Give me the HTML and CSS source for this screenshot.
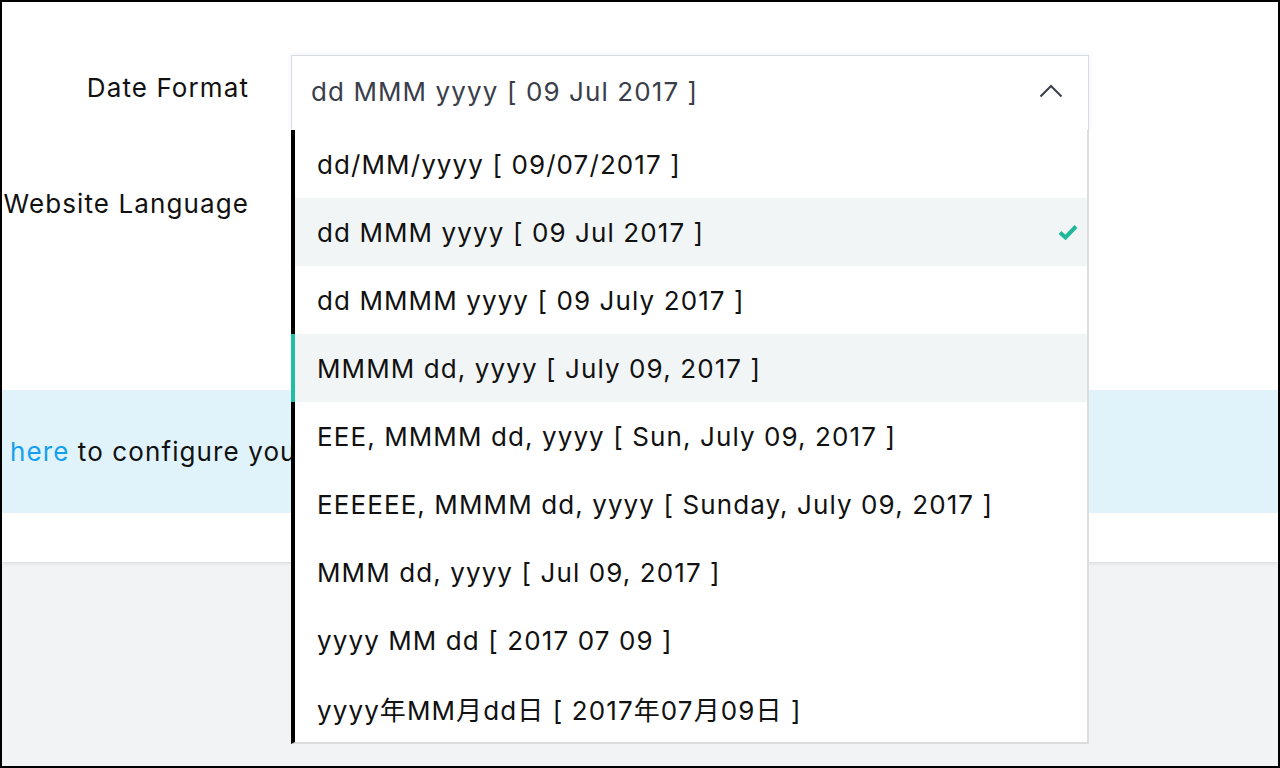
FILE: index.html
```html
<!DOCTYPE html>
<html lang="en">
<head>
<meta charset="utf-8">
<title>Date Format</title>
<link rel="stylesheet" href="styles.css">
</head>
<body>
<div class="frame">
  <div class="card">
    <div class="row row-date">
      <div class="label">Date Format</div>
      <div class="field">
        <div class="select">
          <span class="select-value">dd MMM yyyy [ 09 Jul 2017 ]</span>
          <svg class="chevron" width="24" height="14" viewBox="0 0 24 14"><path d="M1.5 12.5 L12 2 L22.5 12.5" fill="none" stroke="#3b3f4c" stroke-width="2"/></svg>
        </div>
        <ul class="menu">
          <li class="item">dd/MM/yyyy [ 09/07/2017 ]</li>
          <li class="item selected">dd MMM yyyy [ 09 Jul 2017 ]<svg class="check" width="20" height="16" viewBox="0 0 20 16"><path d="M2 8.5 L7.5 13.5 L18 2.5" fill="none" stroke="#1fb89b" stroke-width="4"/></svg></li>
          <li class="item">dd MMMM yyyy [ 09 July 2017 ]</li>
          <li class="item hover">MMMM dd, yyyy [ July 09, 2017 ]</li>
          <li class="item">EEE, MMMM dd, yyyy [ Sun, July 09, 2017 ]</li>
          <li class="item">EEEEEE, MMMM dd, yyyy [ Sunday, July 09, 2017 ]</li>
          <li class="item">MMM dd, yyyy [ Jul 09, 2017 ]</li>
          <li class="item">yyyy MM dd [ 2017 07 09 ]</li>
          <li class="item">yyyy年MM月dd日 [ 2017年07月09日 ]</li>
        </ul>
      </div>
    </div>
    <div class="row row-lang">
      <div class="label">Website Language</div>
      <div class="field"></div>
    </div>
    <div class="band">
      <div class="band-clip"><a class="link">here</a> to configure your</div>
    </div>
  </div>
  <div class="page-bottom"></div>
</div>
</body>
</html>
```
FILE: styles.css
```css
* { box-sizing: border-box; }
html, body { margin: 0; padding: 0; }
body {
  width: 1280px;
  height: 768px;
  overflow: hidden;
  font-family: Inter, "Noto Sans CJK SC", sans-serif;
  color: #111;
  letter-spacing: 1.1px;
}
.frame {
  width: 1280px;
  height: 768px;
  border: 2px solid #000;
  background: #f2f3f5;
  display: flex;
  flex-direction: column;
  overflow: hidden;
}
.card {
  background: #fff;
  height: 560px;
  padding-top: 53px;
  box-shadow: 0 1px 4px rgba(0,0,0,0.12);
  position: relative;
  z-index: 1;
}
.row {
  display: flex;
  gap: 42px;
}
.label {
  width: 247px;
  text-align: right;
  font-size: 26px;
  line-height: 34px;
  color: #111;
  white-space: nowrap;
}
.row-date .label { padding-top: 16px; }
.row-lang { margin-top: 57px; height: 203px; }
.field {
  width: 798px;
  position: relative;
}
.select {
  height: 75px;
  border: 1px solid #d6dae4;
  border-bottom: none;
  background: #fff;
  box-shadow: 0 0 6px rgba(60,70,100,0.08);
  display: flex;
  align-items: center;
  justify-content: space-between;
  padding: 0 25px 0 19px;
}
.select-value {
  font-size: 26px;
  color: #3a3e4a;
  padding-bottom: 3px;
}
.chevron { display: block; margin-top: -4px; }
.menu {
  position: absolute;
  top: 75px;
  left: 0;
  width: 798px;
  margin: 0;
  padding: 0;
  list-style: none;
  background: #fff;
  border-left: 4px solid #000;
  border-right: 2px solid #dcdcdc;
  border-bottom: 2px solid #dcdcdc;
  z-index: 5;
}
.item {
  height: 68px;
  display: flex;
  align-items: center;
  justify-content: space-between;
  padding: 0 9px 0 22px;
  font-size: 26px;
  color: #111;
  white-space: nowrap;
}
.selected, .hover { background: #f1f5f6; }
.hover { position: relative; }
.hover::before {
  content: "";
  position: absolute;
  left: -4px;
  top: 0;
  bottom: 0;
  width: 4px;
  background: #20bfa1;
}
.check { display: block; }
.band {
  height: 123px;
  background: #e0f3fb;
  display: flex;
  align-items: center;
  font-size: 26px;
}
.band-clip {
  width: 289px;
  overflow: hidden;
  white-space: nowrap;
  padding-left: 8px;
}
.link { color: #14a0ef; }
.page-bottom { flex: 1; }
```
